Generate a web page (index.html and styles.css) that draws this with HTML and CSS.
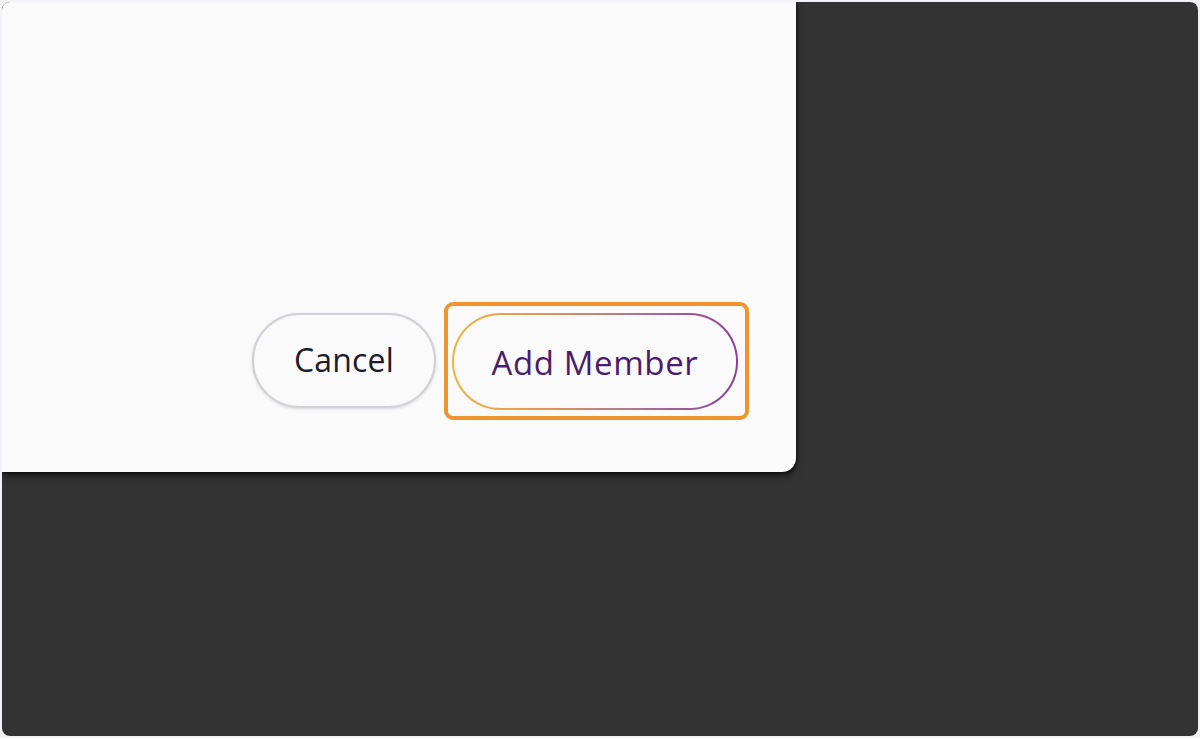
FILE: index.html
```html
<!DOCTYPE html>
<html lang="en">
<head>
<meta charset="utf-8">
<title>Add Member</title>
<link rel="stylesheet" href="styles.css">
</head>
<body>
<div class="screen">
  <div class="backdrop">
    <div class="modal">
      <div class="modal-body"></div>
      <div class="modal-footer">
        <button class="btn btn-cancel" type="button">Cancel</button>
        <span class="highlight">
          <button class="btn btn-primary" type="button">Add Member</button>
        </span>
      </div>
    </div>
  </div>
</div>
</body>
</html>
```
FILE: styles.css
```css
html, body {
  margin: 0;
  padding: 0;
}
body {
  background: #f3f3f7;
  font-family: "Open Sans", "Noto Sans", sans-serif;
}
.screen {
  width: 1200px;
  height: 738px;
  padding: 2px;
  box-sizing: border-box;
}
.backdrop {
  width: 100%;
  height: 100%;
  background: #333333;
  border-radius: 8px;
  overflow: hidden;
  display: flex;
  flex-direction: column;
  align-items: flex-start;
}
.modal {
  width: 794px;
  height: 470px;
  background: #fafafa;
  border-radius: 0 0 14px 0;
  box-shadow: 0 4px 7px rgba(0, 0, 0, 0.55), 1px 1px 3px rgba(0, 0, 0, 0.5);
  display: flex;
  flex-direction: column;
  box-sizing: border-box;
  padding: 0 47px 52px 0;
}
.modal-body {
  flex: 1;
}
.modal-footer {
  display: flex;
  justify-content: flex-end;
  align-items: center;
  gap: 8px;
}
.btn {
  font-family: "Open Sans", "Noto Sans", sans-serif;
  cursor: pointer;
  border-radius: 48px;
  box-sizing: border-box;
  padding: 0;
  display: flex;
  align-items: center;
  justify-content: center;
}
.btn-cancel {
  width: 184px;
  height: 95px;
  margin-top: -1px;
  background: #fafafa;
  border: 2.5px solid #d0d0d7;
  box-shadow: 0 1px 3px rgba(0, 0, 0, 0.14), inset 0 0 1px rgba(0, 0, 0, 0.1);
  color: #1c1c2c;
  font-size: 32px;
  font-weight: 400;
  letter-spacing: 0.2px;
  padding-bottom: 2px;
}
.highlight {
  display: inline-flex;
  border: 4px solid #f0952e;
  border-radius: 9px;
  padding: 7px 7px 6px 4px;
}
.btn-primary {
  width: 286px;
  height: 97px;
  border: 2px solid transparent;
  background:
    linear-gradient(#fafafa, #fafafa) padding-box,
    linear-gradient(90deg, #f0b43a 0%, #d9955a 35%, #b57a8a 60%, #8b3f9b 100%) border-box;
  color: #4b1c6b;
  font-size: 33px;
  font-weight: 500;
  letter-spacing: 0.6px;
  padding-top: 1px;
}
```
